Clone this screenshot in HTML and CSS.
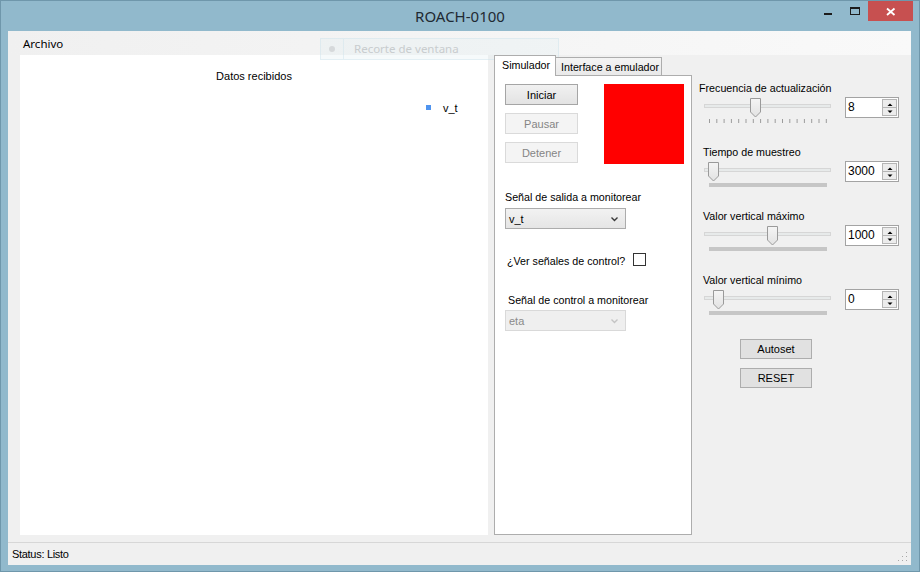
FILE: index.html
```html
<!DOCTYPE html>
<html lang="es">
<head>
<meta charset="utf-8">
<title>ROACH-0100</title>
<link rel="stylesheet" href="styles.css">
</head>
<body>
<div class="window">
  <div class="titlebar">
    <span class="title">ROACH-0100</span>
    <div class="caption">
      <div class="cap-btn cap-min"><svg width="26" height="21"><rect x="9" y="13" width="8" height="2" fill="#1c1c1c"/></svg></div>
      <div class="cap-btn cap-max"><svg width="27" height="21"><rect x="9.5" y="7.5" width="9" height="7" fill="none" stroke="#1c1c1c"/><rect x="9" y="7" width="10" height="2" fill="#1c1c1c"/></svg></div>
      <div class="cap-btn cap-close"><svg width="45" height="21"><path d="M19 8.5 L26.5 15 M26.5 8.5 L19 15" stroke="#fff" stroke-width="1.8"/></svg></div>
    </div>
  </div>
  <div class="client">
    <div class="menustrip"><span class="menu-item">Archivo</span></div>
    <div class="main">
      <div class="chart">
        <div class="chart-title">Datos recibidos</div>
        <div class="legend"><span class="legend-swatch"></span><span class="legend-text">v_t</span></div>
      </div>
      <div class="tabs">
        <div class="tab-headers">
          <div class="tab tab-active">Simulador</div>
          <div class="tab tab-inactive">Interface a emulador</div>
        </div>
        <div class="tab-page">
          <div class="top-row">
            <div class="btn-col">
              <div class="btn btn-default">Iniciar</div>
              <div class="btn btn-disabled">Pausar</div>
              <div class="btn btn-disabled">Detener</div>
            </div>
            <div class="indicator"></div>
          </div>
          <div class="field-label">Señal de salida a monitorear</div>
          <div class="combo">
            <span class="combo-text">v_t</span>
            <svg class="chev" width="9" height="6"><path d="M1.5 1.5 L4.5 4.5 L7.5 1.5" fill="none" stroke="#3a3a3a" stroke-width="1.4"/></svg>
          </div>
          <div class="check-row">
            <span class="check-label">¿Ver señales de control?</span>
            <span class="checkbox"></span>
          </div>
          <div class="field-label field-label-2">Señal de control a monitorear</div>
          <div class="combo combo-disabled">
            <span class="combo-text">eta</span>
            <svg class="chev" width="9" height="6"><path d="M1.5 1.5 L4.5 4.5 L7.5 1.5" fill="none" stroke="#c4c4c4" stroke-width="1.4"/></svg>
          </div>
        </div>
      </div>
      <div class="settings">
        <div class="group">
          <div class="group-label first">Frecuencia de actualización</div>
          <div class="slider-row">
            <div class="slider">
              <div class="track"></div>
              <svg class="thumb" style="left:46px" width="11" height="20"><defs><linearGradient id="tg" x1="0" y1="0" x2="0" y2="1"><stop offset="0" stop-color="#f5f5f5"/><stop offset="1" stop-color="#e2e2e2"/></linearGradient></defs><path d="M0.5 0.5 H10.5 V14 L5.5 19 L0.5 14 Z" fill="url(#tg)" stroke="#9a9a9a"/></svg>
            </div>
            <div class="num"><span class="num-val">8</span><div class="num-spin"><span class="spin"><svg width="14" height="8"><path d="M4.5 6 L7 3.5 L9.5 6 Z" fill="#000"/></svg></span><span class="spin"><svg width="14" height="8"><path d="M4.5 2.5 L7 5 L9.5 2.5 Z" fill="#000"/></svg></span></div></div>
          </div>
          <svg class="ticks" width="118" height="4"><g stroke="#9c9c9c" stroke-width="1"><line x1="0.5" y1="0" x2="0.5" y2="4"/><line x1="7.8" y1="0" x2="7.8" y2="4"/><line x1="15.1" y1="0" x2="15.1" y2="4"/><line x1="22.4" y1="0" x2="22.4" y2="4"/><line x1="29.7" y1="0" x2="29.7" y2="4"/><line x1="37" y1="0" x2="37" y2="4"/><line x1="44.3" y1="0" x2="44.3" y2="4"/><line x1="51.6" y1="0" x2="51.6" y2="4"/><line x1="58.9" y1="0" x2="58.9" y2="4"/><line x1="66.2" y1="0" x2="66.2" y2="4"/><line x1="73.5" y1="0" x2="73.5" y2="4"/><line x1="80.8" y1="0" x2="80.8" y2="4"/><line x1="88.1" y1="0" x2="88.1" y2="4"/><line x1="95.4" y1="0" x2="95.4" y2="4"/><line x1="102.7" y1="0" x2="102.7" y2="4"/><line x1="110" y1="0" x2="110" y2="4"/><line x1="117.3" y1="0" x2="117.3" y2="4"/></g></svg>
        </div>
        <div class="group">
          <div class="group-label">Tiempo de muestreo</div>
          <div class="slider-row">
            <div class="slider">
              <div class="track"></div>
              <svg class="thumb" style="left:4px" width="11" height="20"><path d="M0.5 0.5 H10.5 V14 L5.5 19 L0.5 14 Z" fill="url(#tg)" stroke="#9a9a9a"/></svg>
            </div>
            <div class="num"><span class="num-val">3000</span><div class="num-spin"><span class="spin"><svg width="14" height="8"><path d="M4.5 6 L7 3.5 L9.5 6 Z" fill="#000"/></svg></span><span class="spin"><svg width="14" height="8"><path d="M4.5 2.5 L7 5 L9.5 2.5 Z" fill="#000"/></svg></span></div></div>
          </div>
          <div class="tickbar"></div>
        </div>
        <div class="group">
          <div class="group-label">Valor vertical máximo</div>
          <div class="slider-row">
            <div class="slider">
              <div class="track"></div>
              <svg class="thumb" style="left:63px" width="11" height="20"><path d="M0.5 0.5 H10.5 V14 L5.5 19 L0.5 14 Z" fill="url(#tg)" stroke="#9a9a9a"/></svg>
            </div>
            <div class="num"><span class="num-val">1000</span><div class="num-spin"><span class="spin"><svg width="14" height="8"><path d="M4.5 6 L7 3.5 L9.5 6 Z" fill="#000"/></svg></span><span class="spin"><svg width="14" height="8"><path d="M4.5 2.5 L7 5 L9.5 2.5 Z" fill="#000"/></svg></span></div></div>
          </div>
          <div class="tickbar"></div>
        </div>
        <div class="group">
          <div class="group-label">Valor vertical mínimo</div>
          <div class="slider-row">
            <div class="slider">
              <div class="track"></div>
              <svg class="thumb" style="left:9px" width="11" height="20"><path d="M0.5 0.5 H10.5 V14 L5.5 19 L0.5 14 Z" fill="url(#tg)" stroke="#9a9a9a"/></svg>
            </div>
            <div class="num"><span class="num-val">0</span><div class="num-spin"><span class="spin"><svg width="14" height="8"><path d="M4.5 6 L7 3.5 L9.5 6 Z" fill="#000"/></svg></span><span class="spin"><svg width="14" height="8"><path d="M4.5 2.5 L7 5 L9.5 2.5 Z" fill="#000"/></svg></span></div></div>
          </div>
          <div class="tickbar"></div>
        </div>
        <div class="action-btns">
          <div class="btn btn-plain">Autoset</div>
          <div class="btn btn-plain">RESET</div>
        </div>
      </div>
    </div>
    <div class="statusbar">
      <span class="status-text">Status: Listo</span>
      <svg class="grip" width="10" height="10"><g fill="#a8a8a8"><rect x="8" y="0" width="1" height="1"/><rect x="8" y="4" width="1" height="1"/><rect x="8" y="8" width="1" height="1"/><rect x="4" y="4" width="1" height="1"/><rect x="4" y="8" width="1" height="1"/><rect x="0" y="8" width="1" height="1"/></g></svg>
    </div>
  </div>
  <div class="snip">
    <div class="snip-icon"><span class="snip-dot"></span></div>
    <div class="snip-text">Recorte de ventana</div>
  </div>
</div>
</body>
</html>
```
FILE: styles.css
```css
* { box-sizing: border-box; }
body {
  margin: 0;
  font-family: "Liberation Sans", Arial, sans-serif;
  font-size: 10.7px;
  color: #000;
}
.window {
  width: 920px;
  height: 572px;
  background: #91b9cc;
  border: 1px solid #6f97ab;
  display: flex;
  flex-direction: column;
  position: relative;
  overflow: hidden;
}
.titlebar {
  height: 30px;
  flex: none;
  display: grid;
  grid-template-columns: 1fr auto 1fr;
  align-items: center;
}
.title {
  grid-column: 2;
  font-family: "Noto Sans", sans-serif;
  font-size: 15px;
  color: #1f2a33;
  line-height: 20px;
  padding-bottom: 1px;
}
.caption {
  grid-column: 3;
  justify-self: end;
  align-self: start;
  display: flex;
  margin-top: -1px;
  margin-right: 6px;
}
.cap-btn { height: 21px; display: block; }
.cap-btn svg { display: block; }
.cap-min { width: 26px; }
.cap-max { width: 27px; }
.cap-close { width: 45px; background: #c75050; }

.client {
  flex: 1;
  margin: 0 8px 6px 7px;
  background: #f0f0f0;
  display: flex;
  flex-direction: column;
}
.menustrip {
  height: 24px;
  flex: none;
  background: linear-gradient(to right, #f0f0f0, #f9f9f9);
  display: flex;
  align-items: center;
  padding-left: 15px;
}
.menu-item {
  font-family: "Noto Sans", sans-serif;
  font-size: 11.5px;
  color: #000;
}
.main {
  height: 480px;
  flex: none;
  display: flex;
  padding-left: 12px;
}
.chart {
  width: 468px;
  background: #fff;
}
.chart-title {
  padding-top: 15px;
  line-height: 13px;
  text-align: center;
  font-size: 11px;
}
.legend {
  margin-top: 18px;
  display: flex;
  align-items: center;
  height: 13px;
  padding-left: 406px;
}
.legend-swatch {
  width: 5px;
  height: 5px;
  background: #4f94ef;
}
.legend-text {
  margin-left: 12px;
  font-size: 11px;
}

.tabs {
  margin-left: 6px;
  width: 198px;
  display: flex;
  flex-direction: column;
}
.tab-headers {
  height: 20px;
  flex: none;
  display: flex;
  align-items: flex-end;
  position: relative;
  z-index: 1;
}
.tab {
  border: 1px solid #adadad;
  border-bottom: none;
  white-space: nowrap;
}
.tab-active {
  width: 62px;
  height: 21px;
  margin-bottom: -1px;
  background: #fff;
  padding-left: 7px;
  line-height: 19px;
}
.tab-inactive {
  width: 107px;
  height: 18px;
  margin-left: -1px;
  background: linear-gradient(#f4f4f4, #e9e9e9);
  padding-left: 5px;
  line-height: 19px;
}
.tab-page {
  flex: 1;
  border: 1px solid #adadad;
  background: #fff;
  padding: 8px 0 0 10px;
  display: flex;
  flex-direction: column;
  align-items: flex-start;
}
.top-row { display: flex; }
.btn-col { display: flex; flex-direction: column; gap: 8px; }
.btn {
  width: 73px;
  height: 21px;
  display: flex;
  align-items: center;
  justify-content: center;
  border: 1px solid #adadad;
  font-size: 11px;
}
.btn-default {
  background: linear-gradient(#f1f1f1, #e3e3e3);
  border-color: #a5a5a5;
}
.btn-disabled {
  background: #f4f4f4;
  border-color: #dadada;
  color: #858585;
}
.indicator {
  width: 80px;
  height: 80px;
  margin-left: 26px;
  background: #ff0000;
}
.field-label {
  margin-top: 27px;
  line-height: 13px;
  white-space: nowrap;
}
.field-label-2 {
  margin-top: 28px;
  padding-left: 3px;
}
.combo {
  margin-top: 4px;
  width: 121px;
  height: 21px;
  border: 1px solid #acacac;
  background: linear-gradient(#f2f2f2, #e5e5e5);
  display: flex;
  align-items: center;
  padding-left: 3px;
  padding-right: 6px;
  font-size: 11px;
}
.combo-text { flex: 1; }
.combo-disabled {
  margin-top: 3px;
  background: #efefef;
  border-color: #d9d9d9;
  color: #8a8a8a;
}
.chev { display: block; }
.check-row {
  margin-top: 24px;
  height: 13px;
  display: flex;
  align-items: center;
}
.check-label {
  width: 128px;
  padding-left: 2px;
  padding-top: 3px;
  white-space: nowrap;
}
.checkbox {
  width: 13px;
  height: 13px;
  border: 1px solid #333;
  background: #fff;
}

.settings {
  margin-left: 7px;
  padding-top: 26px;
  display: flex;
  flex-direction: column;
}
.group {
  height: 64px;
  display: flex;
  flex-direction: column;
}
.group-label {
  line-height: 14px;
  padding-left: 4px;
  white-space: nowrap;
}
.group-label.first { padding-left: 0; }
.slider-row {
  margin-top: 1px;
  height: 22px;
  display: flex;
  padding-left: 5px;
}
.slider {
  width: 127px;
  height: 22px;
  position: relative;
}
.track {
  margin-top: 8px;
  height: 4px;
  border: 1px solid #d6d6d6;
  background: #e7eaea;
}
.thumb {
  position: absolute;
  top: 2px;
  display: block;
}
.num {
  margin-left: 14px;
  margin-top: 1px;
  width: 54px;
  height: 21px;
  border: 1px solid #a3a3a3;
  background: #fff;
  display: flex;
}
.num-val {
  flex: 1;
  padding-left: 2px;
  line-height: 19px;
  font-size: 12px;
}
.num-spin {
  width: 16px;
  display: flex;
  flex-direction: column;
  padding: 1px 1px 1px 0;
}
.spin {
  flex: 1;
  border: 1px solid #b5b5b5;
  background: #ececec;
  display: flex;
  align-items: center;
  justify-content: center;
  overflow: hidden;
}
.spin + .spin { border-top: none; }
.spin svg { display: block; }
.ticks {
  display: block;
  margin-top: 1px;
  margin-left: 10px;
}
.tickbar {
  margin-top: 1px;
  margin-left: 10px;
  width: 118px;
  height: 4px;
  background: #c6c6c6;
}
.action-btns {
  margin-top: 2px;
  margin-left: 41px;
  display: flex;
  flex-direction: column;
  gap: 9px;
}
.btn-plain {
  width: 72px;
  height: 20px;
  background: #e1e1e1;
  border-color: #adadad;
}
.statusbar {
  margin-top: 7px;
  height: 23px;
  flex: none;
  border-top: 1px solid #d7d7d7;
  display: flex;
  align-items: center;
  padding-left: 4px;
  padding-right: 3px;
}
.status-text {
  flex: 1;
  font-size: 11px;
  letter-spacing: -0.3px;
}
.grip { display: block; align-self: flex-end; margin-bottom: 3px; }

.snip {
  position: absolute;
  left: 319px;
  top: 37px;
  width: 239px;
  height: 22px;
  display: flex;
  background: rgba(226, 238, 243, 0.3);
  border: 1px solid rgba(205, 226, 236, 0.45);
}
.snip-icon {
  width: 23px;
  border-right: 1px solid rgba(205, 226, 236, 0.45);
  display: flex;
  align-items: center;
  justify-content: center;
}
.snip-dot {
  width: 6px;
  height: 6px;
  border-radius: 50%;
  background: #d6d9db;
}
.snip-text {
  padding-left: 10px;
  font-family: "Noto Sans", sans-serif;
  font-size: 11.5px;
  line-height: 20px;
  color: #c8ccce;
}
```
